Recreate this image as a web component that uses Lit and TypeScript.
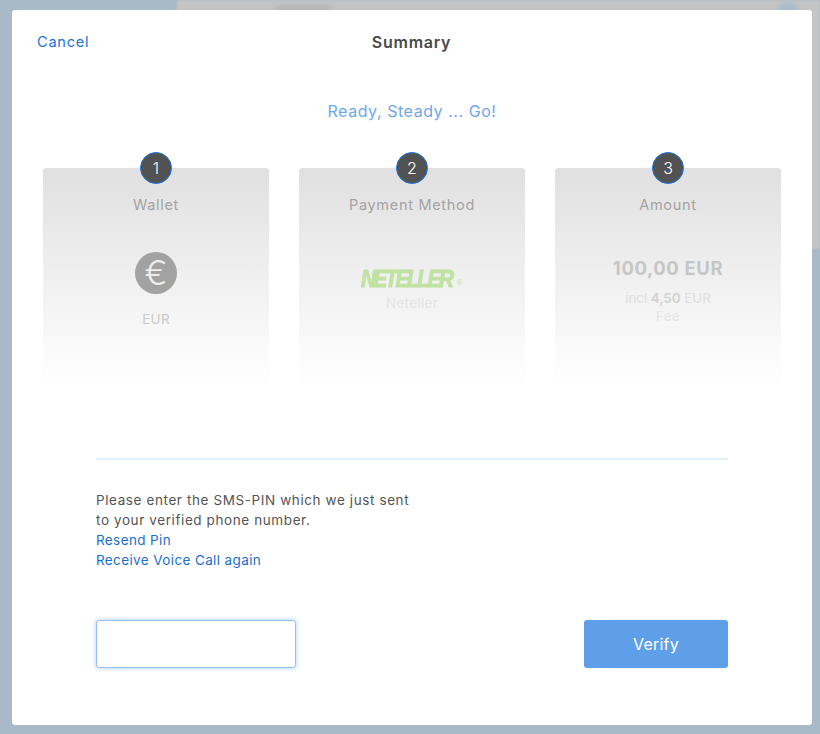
import { LitElement, html, css } from "lit";
import { customElement } from "lit/decorators.js";

@customElement("app-root")
export class AppRoot extends LitElement {
  static styles = css`
    :host { display: block; width: 820px; height: 734px; position: relative; overflow: hidden; background: #a9b9c7;
      font-family: Inter, "Noto Sans", sans-serif; color: #4a4a4a; }
    .backdrop { position: absolute; left: 177px; top: 0; right: 0; height: 249px; background: #c4c4c4; filter: blur(1px); }
    .backdrop-dot { position: absolute; left: 777px; top: 2px; width: 22px; height: 22px; border-radius: 50%; background: #a9bccc; filter: blur(2px); }
    .backdrop-text { position: absolute; left: 275px; top: 6px; width: 56px; height: 5px; background: #b2b2b2; filter: blur(2px); }
    .modal { position: absolute; left: 12px; top: 10px; width: 800px; height: 715px; background: #fff; border-radius: 3px; box-sizing: border-box; }
    .header { display: grid; grid-template-columns: 1fr auto 1fr; align-items: center; height: 64px; padding: 0 25px; }
    .cancel { font-size: 14.5px; color: #1a73d9; letter-spacing: 0.8px; margin-bottom: 2px; }
    .title { font-size: 16px; font-weight: 600; color: #4a4a4a; letter-spacing: 0.75px; margin-right: 1px; }
    .ready { text-align: center; color: #6ea8ea; font-size: 16px; line-height: 22px; margin-top: 26px; letter-spacing: 0.55px; }
    .cards { display: grid; grid-template-columns: repeat(3, 226px); gap: 30px; margin: 46px 0 0 31px; }
    .card { position: relative; height: 218px; border-radius: 3px 3px 0 0; background: linear-gradient(#e0e0e0, #ffffff); display: flex; flex-direction: column; align-items: center; padding-top: 27px; box-sizing: border-box; }
    .badge { position: absolute; left: 97px; top: -16px; width: 32px; height: 32px; box-sizing: border-box; border-radius: 50%; background: #525252; border: 1px solid #1b78ea; color: #fff; font-size: 16px; font-weight: 300; display: flex; align-items: center; justify-content: center; }
    .card-title { font-size: 14.5px; line-height: 20px; color: #a3a3a3; letter-spacing: 0.7px; }
    .euro { margin-top: 37px; width: 42px; height: 42px; border-radius: 50%; background: #a2a2a2; color: #eeeeee; font-size: 34px; font-weight: 300; line-height: 42px; text-align: center; }
    .sub { font-size: 13.5px; line-height: 18px; letter-spacing: 0.3px; }
    .eur { margin-top: 16px; color: #cacaca; }
    .logo { margin-top: 53px; height: 22px; display: flex; align-items: center; color: #c0e2a2; font: italic 700 23.5px/22px "Liberation Sans", sans-serif; letter-spacing: -2.6px; -webkit-text-stroke: 1px #c0e2a2; transform: scaleX(0.88); }
    .logo sup { font-size: 8px; font-style: normal; font-weight: 400; -webkit-text-stroke: 0; letter-spacing: 0; margin: 8px 0 0 6px; line-height: 1; }
    .neteller { margin-top: 4px; color: #e4e4e4; }
    .amount { margin-top: 40px; font-size: 18.5px; line-height: 26px; font-weight: 700; color: #c6c6c6; letter-spacing: 0.6px; }
    .fee1 { margin-top: 8px; color: #dfdfdf; letter-spacing: -0.1px; }
    .fee2 { color: #e6e6e6; }
    .fee1 b { font-weight: 600; color: #d2d2d2; }
    .form { margin: 72px 84px 0; border-top: 2px solid #e3eef7; padding-top: 30px; }
    .msg { font-size: 13.5px; line-height: 20px; color: #555; letter-spacing: 0.6px; }
    .msg a { display: block; color: #1a6fd0; letter-spacing: 0.38px; }
    .row { display: flex; justify-content: space-between; margin-top: 50px; }
    .pin { width: 200px; height: 48px; box-sizing: border-box; background: #fff; border: 1px solid #94c0f5; border-radius: 3px; box-shadow: 0 0 5px rgba(120, 175, 240, .6); outline: none; }
    .verify { width: 144px; height: 48px; border: 0; border-radius: 3px; background: #5e9fe8; color: #fff; font: 16px Inter, sans-serif; letter-spacing: 0.2px; }
  `;

  render() {
    return html`
      <div class="backdrop"></div>
      <div class="backdrop-text"></div>
      <div class="backdrop-dot"></div>
      <div class="modal">
        <div class="header">
          <span class="cancel">Cancel</span>
          <span class="title">Summary</span>
          <span></span>
        </div>
        <div class="ready">Ready, Steady ... Go!</div>
        <div class="cards">
          <div class="card">
            <div class="badge">1</div>
            <div class="card-title">Wallet</div>
            <div class="euro">€</div>
            <div class="sub eur">EUR</div>
          </div>
          <div class="card">
            <div class="badge">2</div>
            <div class="card-title">Payment Method</div>
            <div class="logo">NETELLER<sup>®</sup></div>
            <div class="sub neteller">Neteller</div>
          </div>
          <div class="card">
            <div class="badge">3</div>
            <div class="card-title">Amount</div>
            <div class="amount">100,00 EUR</div>
            <div class="sub fee1">incl <b>4,50</b> EUR</div>
            <div class="sub fee2">Fee</div>
          </div>
        </div>
        <div class="form">
          <div class="msg">
            Please enter the SMS-PIN which we just sent<br />to your verified phone number.
            <a>Resend Pin</a>
            <a>Receive Voice Call again</a>
          </div>
          <div class="row">
            <input class="pin" type="text" />
            <button class="verify">Verify</button>
          </div>
        </div>
      </div>
    `;
  }
}
